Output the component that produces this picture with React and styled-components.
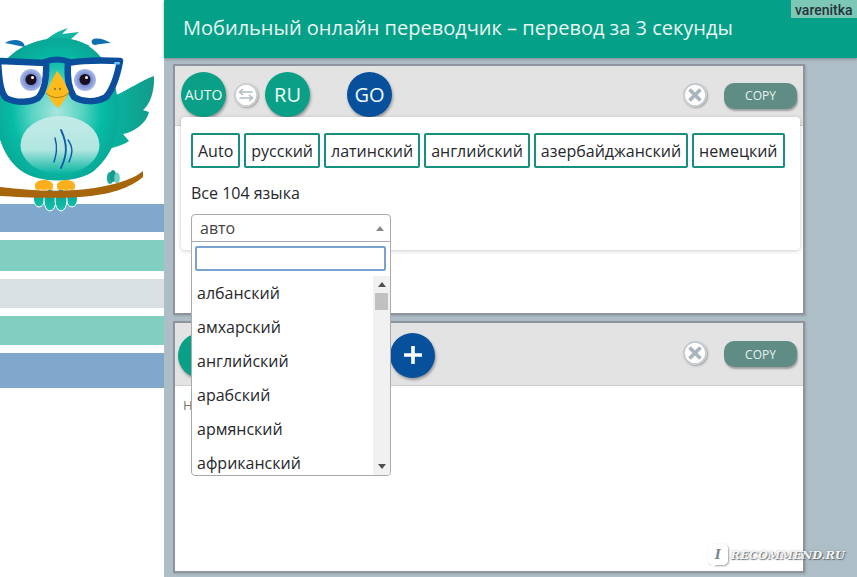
import React from "react"
import styled, { createGlobalStyle } from "styled-components"

const GlobalStyle = createGlobalStyle`
  html, body { margin: 0; padding: 0; background: #aebec6; }
  body { font-family: "Open Sans", "Liberation Sans", sans-serif; }
`

const chips = ["Auto", "русский", "латинский", "английский", "азербайджанский", "немецкий"]
const languages = ["албанский", "амхарский", "английский", "арабский", "армянский", "африканский"]

const Owl = () => (
  <OwlSvg viewBox="0 0 164 204" width="164" height="204">
    <defs>
      <radialGradient id="bodyFill" cx="50%" cy="52%" r="62%">
        <stop offset="0%" stopColor="#a8e6de" />
        <stop offset="32%" stopColor="#5ad4c4" />
        <stop offset="58%" stopColor="#06bca6" />
        <stop offset="100%" stopColor="#0c9a8c" />
      </radialGradient>
      <linearGradient id="bellyFill" x1="0" y1="0" x2="0" y2="1">
        <stop offset="0%" stopColor="#c4ebe8" />
        <stop offset="58%" stopColor="#b2e6e1" />
        <stop offset="100%" stopColor="#06b5a0" />
      </linearGradient>
      <linearGradient id="wingFill" x1="0" y1="0" x2="1" y2="0">
        <stop offset="0%" stopColor="#04b7a0" />
        <stop offset="100%" stopColor="#149a8c" />
      </linearGradient>
      <linearGradient id="tailFill" x1="0" y1="0" x2="0" y2="1">
        <stop offset="0%" stopColor="#0c9a8a" />
        <stop offset="100%" stopColor="#14c4ae" />
      </linearGradient>
      <radialGradient id="irisFill" cx="50%" cy="50%" r="50%">
        <stop offset="0%" stopColor="#3a58b0" />
        <stop offset="100%" stopColor="#aebcec" />
      </radialGradient>
    </defs>
    <path d="M116 95C128 90 142 80 154 76C155 90 150 105 143 110L149 112C147 122 135 132 123 134L129 141C122 146 115 146 108 150Z" fill="url(#wingFill)" />
    <path d="M38 48C45 40 52 33 68 28L62 34L79 32L70 40C76 40 82 42 90 46Z" fill="#14b5a0" />
    <path d="M60 38C90 38 110 60 116 90C123 120 118 150 95 170C80 183 40 185 20 170C-5 150 -8 110 -3 80C0 55 30 38 60 38Z" fill="url(#bodyFill)" />
    <ellipse cx="60" cy="145" rx="39.5" ry="29" fill="url(#bellyFill)" />
    <g fill="none" stroke="#0b5aa6" strokeLinecap="round">
      <path d="M61 130C68 145 67 155 61 168" strokeWidth="1.8" />
      <path d="M55 138C58 148 56 155 54 162" strokeWidth="1.4" />
      <path d="M68 140C74 148 72 155 69 162" strokeWidth="1.4" />
    </g>
    <path d="M5 43C10 40 20 38 24 44L25 47C18 46 12 44 5 43Z" fill="#0f70b0" />
    <path d="M92 40C96 37 104 39 111 43C105 43 100 44 95 45C92 45 91 42 92 40Z" fill="#0f70b0" />
    <g stroke="#0b4e9c" strokeWidth="6.5" strokeLinejoin="round">
      <path d="M-2 61L46 63C47 78 44 92 38 98C30 103 15 103 6 98C0 92 -1 78 -2 61Z" fill="#fff" />
      <path d="M68 63C85 60 100 60 120 61C118 72 114 88 106 97C96 103 82 102 74 97C68 88 67 76 68 63Z" fill="#fff" />
      <path d="M44 62C52 59 62 59 70 62" fill="none" strokeWidth="6" />
    </g>
    <rect x="114" y="62" width="6" height="2.5" rx="1" fill="#6cc0ee" />
    <circle cx="31" cy="80" r="11" fill="url(#irisFill)" />
    <circle cx="85" cy="80" r="11" fill="url(#irisFill)" />
    <circle cx="31" cy="79.5" r="5.5" fill="#1a1020" />
    <circle cx="85" cy="79.5" r="5.5" fill="#1a1020" />
    <circle cx="32.5" cy="77.5" r="1.5" fill="#fff" />
    <circle cx="86.5" cy="77.5" r="1.5" fill="#fff" />
    <path d="M57 71C62 76 66 85 69 92C66 98 62 104 58 108C53 104 49 98 46 92C50 85 53 77 57 71Z" fill="#fdbb1e" />
    <path d="M46 93C52 99 62 99 69 93" fill="none" stroke="#8a6a10" strokeWidth="0.7" />
    <circle cx="55" cy="89" r="0.9" fill="#5a6a20" />
    <circle cx="60" cy="89" r="0.9" fill="#5a6a20" />
    <g fill="url(#tailFill)" stroke="#fff" strokeWidth="1">
      <ellipse cx="39" cy="199" rx="5.5" ry="8" />
      <ellipse cx="72" cy="199" rx="5.5" ry="8" />
      <ellipse cx="50" cy="200" rx="6" ry="11" />
      <ellipse cx="61" cy="200" rx="6" ry="11" />
    </g>
    <ellipse cx="110" cy="178" rx="3.2" ry="6" fill="#1fa898" />
    <ellipse cx="113" cy="176" rx="3.2" ry="6" fill="#169a8c" />
    <ellipse cx="117" cy="178" rx="2.8" ry="5.5" fill="#6cd0c4" />
    <path d="M0 187C40 192 80 192 105 186C120 183 135 178 143 171L143 177C130 188 110 195 80 197C50 199 20 197 0 196Z" fill="#a8660c" />
    <g fill="#fcae1c">
      <ellipse cx="44" cy="185" rx="9" ry="5" />
      <ellipse cx="66" cy="185" rx="9" ry="5" />
      <circle cx="38" cy="187" r="3" />
      <circle cx="50" cy="187" r="3" />
      <circle cx="60" cy="187" r="3" />
      <circle cx="72" cy="187" r="3" />
    </g>
  </OwlSvg>
)

const SwapIcon = () => (
  <svg viewBox="0 0 24 24" width="24" height="24">
    <circle cx="12" cy="12" r="11" fill="#fff" stroke="#c6cbcf" strokeWidth="1.5" />
    <g fill="none" stroke="#b3bcc2" strokeWidth="1.6">
      <path d="M18.5 9H6M9 6L5.5 9L9 12" />
      <path d="M5.5 15H18M15 12L18.5 15L15 18" />
    </g>
  </svg>
)

const CloseIcon = () => (
  <svg viewBox="0 0 24 24" width="24" height="24">
    <circle cx="12" cy="12" r="11" fill="#fff" stroke="#bfc6cb" strokeWidth="1.5" />
    <path d="M6.5 6.5L17.5 17.5M17.5 6.5L6.5 17.5" stroke="#a9b5bd" strokeWidth="3.8" />
  </svg>
)

function Toolbar({ tall, children }) {
  return (
    <Bar $tall={tall}>
      {children}
      <RoundIcon $push $lift={tall ? 5 : 0}><CloseIcon /></RoundIcon>
      <CopyButton $shift={tall ? -2 : 2}>COPY</CopyButton>
    </Bar>
  )
}

export default function App() {
  return (
    <Page>
      <GlobalStyle />
      <Sidebar>
        <Owl />
        <Stripe $color="#7fa8cc" $height={28} />
        <Stripe $color="#80cfc0" $height={31} />
        <Stripe $color="#d9e0e3" $height={29} />
        <Stripe $color="#80cfc0" $height={29} />
        <Stripe $color="#7fa8cc" $height={35} />
      </Sidebar>
      <Main>
        <Header>Мобильный онлайн переводчик – перевод за 3 секунды</Header>
        <Panels>
          <Panel $height={251} $top>
            <Toolbar>
              <Circle $small>AUTO</Circle>
              <RoundIcon $gap={8}><SwapIcon /></RoundIcon>
              <Circle $gap={7}>RU</Circle>
              <Circle $gap={37} $color="#07519c">GO</Circle>
            </Toolbar>
            <Popover>
              <Chips>
                {chips.map(c => <Chip key={c}>{c}</Chip>)}
              </Chips>
              <AllLabel>Все 104 языка</AllLabel>
              <Select>
                <SelectValue>авто</SelectValue>
                <Caret $up />
                <Dropdown>
                  <Search />
                  <ListWrap>
                    <Options>
                      {languages.map(l => <Option key={l}>{l}</Option>)}
                    </Options>
                    <Scrollbar>
                      <ScrollArrow><Caret $up $dark /></ScrollArrow>
                      <Thumb />
                      <ScrollSpace />
                      <ScrollArrow><Caret $dark /></ScrollArrow>
                    </Scrollbar>
                  </ListWrap>
                </Dropdown>
              </Select>
            </Popover>
          </Panel>
          <Panel $height={252}>
            <Toolbar tall>
              <Circle />
              <Circle $gap={167} $color="#07519c">
                <svg viewBox="0 0 24 24" width="24" height="24">
                  <path d="M12 3V21M3 12H21" stroke="#fff" strokeWidth="3.6" />
                </svg>
              </Circle>
            </Toolbar>
            <Output>Н</Output>
          </Panel>
        </Panels>
        <Username>varenitka</Username>
        <Watermark>
          <WatermarkBadge>I</WatermarkBadge>
          RECOMMEND.RU
        </Watermark>
      </Main>
    </Page>
  )
}

const Page = styled.div`
  display: grid;
  grid-template-columns: 164px 1fr;
  width: 857px;
  height: 577px;
  overflow: hidden;
`

const Sidebar = styled.aside`
  background: #fff;
  display: flex;
  flex-direction: column;
`

const OwlSvg = styled.svg`
  display: block;
  flex: none;
  overflow: visible;
  position: relative;
  z-index: 1;
`

const Stripe = styled.div`
  height: ${p => p.$height}px;
  flex: none;
  background: ${p => p.$color};
  margin-bottom: 8px;
`

const Main = styled.main`
  position: relative;
  background: #aebec6;
  display: flex;
  flex-direction: column;
`

const Header = styled.header`
  height: 58px;
  flex: none;
  background: #05a088;
  color: #e9f6f1;
  font-size: 20px;
  line-height: 56px;
  padding-left: 19px;
  box-shadow: 0 1px 3px rgba(0, 0, 0, .3);
`

const Username = styled.div`
  position: absolute;
  top: 0;
  right: 0;
  width: 66px;
  height: 18px;
  background: #7cc7b6;
  color: #26343a;
  font-family: "Roboto", "Liberation Sans", sans-serif;
  font-size: 14px;
  font-weight: 500;
  line-height: 20px;
  padding-left: 4px;
  box-sizing: border-box;
`

const Panels = styled.div`
  display: flex;
  flex-direction: column;
  gap: 6px;
  padding: 6px 52px 0 9px;
`

const Panel = styled.section`
  position: relative;
  z-index: ${p => (p.$top ? 2 : 1)};
  height: ${p => p.$height}px;
  box-sizing: border-box;
  border: 2px solid #8f939e;
  background: #fff;
  display: flex;
  flex-direction: column;
  box-shadow: 1px 1px 2px rgba(0, 0, 0, .15);
`

const Bar = styled.div`
  height: ${p => (p.$tall ? 63 : 60)}px;
  flex: none;
  background: #e3e3e3;
  display: flex;
  align-items: center;
  padding: ${p => (p.$tall ? "2px 6px 0 3px" : "0 6px 2px 6px")};
  box-sizing: border-box;
  border-bottom: 1px solid #cfcfcf;
`

const Circle = styled.div`
  width: 45px;
  height: 45px;
  flex: none;
  border-radius: 50%;
  margin-left: ${p => p.$gap || 0}px;
  background: ${p => p.$color || "#09a087"};
  color: #f2faf8;
  font-size: ${p => (p.$small ? 14 : 20)}px;
  display: flex;
  align-items: center;
  justify-content: center;
  box-shadow: 1px 2px 3px rgba(0, 0, 0, .35);
`

const RoundIcon = styled.div`
  display: flex;
  margin-left: ${p => (p.$push ? "auto" : `${p.$gap || 0}px`)};
  margin-right: ${p => (p.$push ? 17 : 0)}px;
  margin-bottom: ${p => p.$lift || 0}px;
  border-radius: 50%;
  box-shadow: 1px 1px 2px rgba(0, 0, 0, .3);
`

const CopyButton = styled.button`
  width: 73px;
  height: 26px;
  flex: none;
  border: 0;
  padding: 0;
  margin-top: ${p => p.$shift}px;
  border-radius: 10px;
  background: #5f8d86;
  color: #e8f1ef;
  font-family: inherit;
  font-size: 12px;
  box-shadow: 1px 2px 2px rgba(0, 0, 0, .3);
`

const Popover = styled.div`
  position: absolute;
  left: 6px;
  top: 51px;
  width: 619px;
  height: 133px;
  box-sizing: border-box;
  padding: 16px 10px 8px;
  background: #fff;
  border-radius: 4px;
  box-shadow: 0 1px 4px rgba(0, 0, 0, .2);
`

const Chips = styled.div`
  display: flex;
  gap: 4px;
`

const Chip = styled.div`
  height: 35px;
  box-sizing: border-box;
  border: 2px solid #17907f;
  border-radius: 2px;
  padding: 0 5px;
  color: #26282c;
  font-size: 16px;
  line-height: 33px;
`

const AllLabel = styled.div`
  height: 22px;
  margin: 14px 0 10px;
  color: #26282c;
  font-size: 16px;
  line-height: 22px;
`

const Select = styled.div`
  position: relative;
  width: 200px;
  height: 28px;
  box-sizing: border-box;
  border: 1px solid #aaa;
  border-radius: 4px 4px 0 0;
  background: #fff;
  display: flex;
  align-items: center;
  justify-content: space-between;
  padding: 0 6px 0 8px;
`

const SelectValue = styled.span`
  color: #444;
  font-size: 16px;
  line-height: 30px;
`

const Caret = styled.span`
  width: 0;
  height: 0;
  border-left: 4px solid transparent;
  border-right: 4px solid transparent;
  ${p => (p.$up
    ? `border-bottom: 5px solid ${p.$dark ? "#505050" : "#888"};`
    : `border-top: 5px solid ${p.$dark ? "#505050" : "#888"};`)}
`

const Dropdown = styled.div`
  position: absolute;
  left: -1px;
  right: -1px;
  top: 26px;
  height: 235px;
  box-sizing: border-box;
  background: #fff;
  border: 1px solid #aaa;
  border-radius: 0 0 4px 4px;
  overflow: hidden;
  display: flex;
  flex-direction: column;
  z-index: 3;
`

const Search = styled.input`
  flex: none;
  height: 25px;
  margin: 4px 4px 5px 3px;
  padding: 0;
  box-sizing: border-box;
  border: 2px solid #7ba2cf;
  border-radius: 2px;
  outline: none;
`

const ListWrap = styled.div`
  flex: 1;
  min-height: 0;
  display: flex;
`

const Options = styled.div`
  flex: 1;
  overflow: hidden;
`

const Option = styled.div`
  height: 34px;
  padding-left: 5px;
  color: #26282c;
  font-size: 16px;
  line-height: 34px;
`

const Scrollbar = styled.div`
  width: 17px;
  flex: none;
  background: #f1f1f1;
  display: flex;
  flex-direction: column;
  align-items: center;
`

const ScrollArrow = styled.div`
  height: 17px;
  flex: none;
  display: flex;
  align-items: center;
  justify-content: center;
`

const Thumb = styled.div`
  width: 13px;
  height: 17px;
  flex: none;
  background: #c1c1c1;
`

const ScrollSpace = styled.div`
  flex: 1;
`

const Output = styled.div`
  padding: 10px 8px;
  color: #777;
  font-size: 13px;
`

const Watermark = styled.div`
  position: absolute;
  z-index: 4;
  right: 12px;
  bottom: 12px;
  display: flex;
  align-items: center;
  gap: 3px;
  color: rgba(255, 255, 255, .92);
  font-family: "DejaVu Serif", "Liberation Serif", serif;
  font-size: 11.4px;
  font-weight: 700;
  font-style: italic;
  text-shadow: 1px 1px 1px rgba(80, 90, 100, .8), 0 0 2px rgba(80, 90, 100, .5);
`

const WatermarkBadge = styled.span`
  position: relative;
  width: 20px;
  height: 21px;
  border-radius: 5px;
  background: rgba(255, 255, 255, .92);
  color: #7d8a92;
  font-size: 13px;
  line-height: 21px;
  text-align: center;
  text-shadow: none;
  box-shadow: 1px 1px 2px rgba(60, 70, 80, .5);
  &::after {
    content: "";
    position: absolute;
    left: 3px;
    bottom: -4px;
    border-top: 4px solid rgba(255, 255, 255, .92);
    border-right: 5px solid transparent;
  }
`
